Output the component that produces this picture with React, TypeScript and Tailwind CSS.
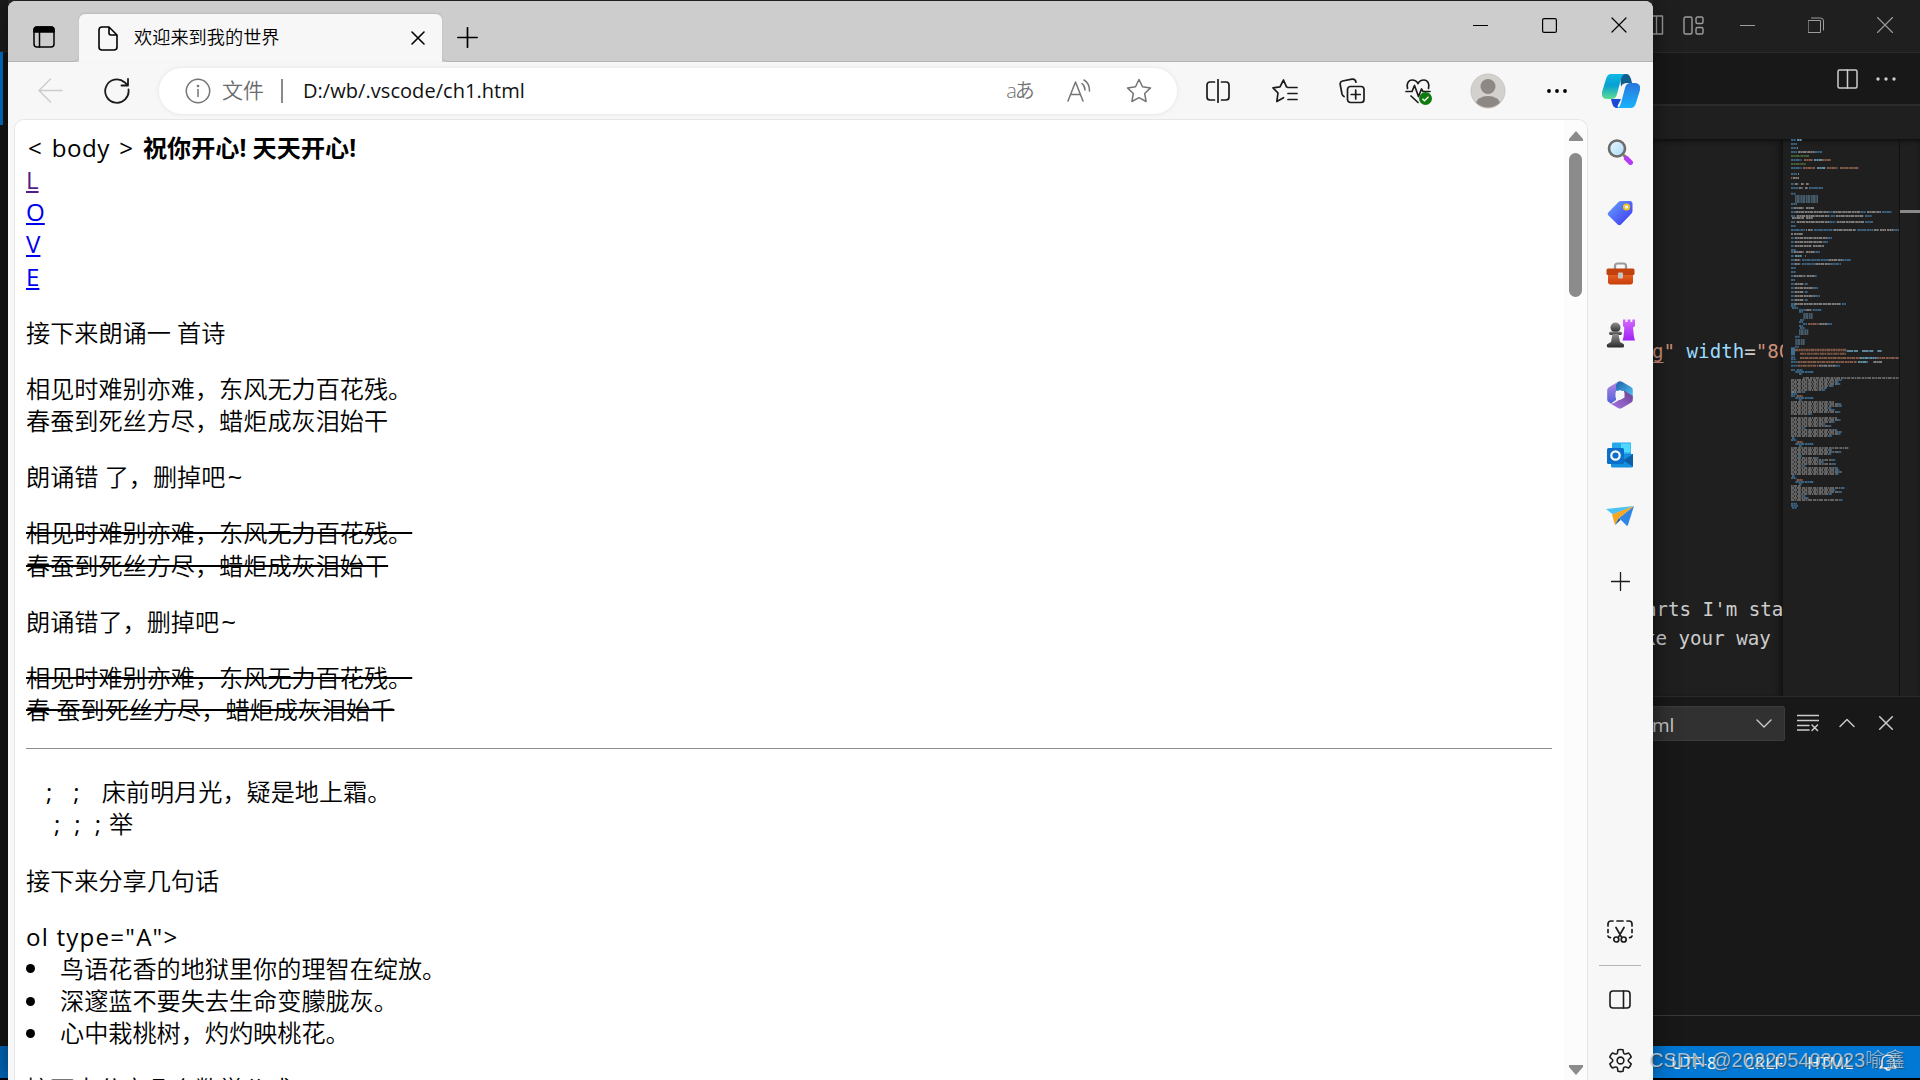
import React from 'react';

type IconProps = {
    w: number;
    h?: number;
    box: string;
    className?: string;
    sw?: number;
    children: React.ReactNode;
};

const Icon: React.FC<IconProps> = ({ w, h, box, className, sw = 1.5, children }) => (
    <svg width={w} height={h ?? w} viewBox={box} className={`shrink-0 ${className ?? ''}`} fill="none" stroke="currentColor" strokeWidth={sw} strokeLinecap="round" strokeLinejoin="round">
        {children}
    </svg>
);

const palette: Record<string, string> = {
    b: '#3f6d92',
    w: '#8c8c8c',
    o: '#94634f',
    g: '#4b6b3a',
    c: '#6c9fb8',
};

// y, x, width, colour
type Seg = [number, number, number, string];

const minimap: Seg[] = [
    [30, 33, 14, 'b'], [30, 51, 14, 'c'], [42, 33, 18, 'b'], [54, 33, 15, 'b'], [54, 50, 4, 'w'],
    [66, 33, 18, 'b'], [66, 54, 50, 'w'], [66, 104, 22, 'b'],
    [78, 33, 54, 'g'], [90, 33, 32, 'b'], [90, 72, 27, 'o'], [90, 102, 24, 'c'], [90, 126, 27, 'o'],
    [102, 33, 45, 'g'], [114, 33, 32, 'b'], [114, 69, 36, 'o'], [114, 111, 25, 'c'], [114, 141, 32, 'o'], [114, 180, 57, 'o'],
    [132, 33, 18, 'b'], [132, 54, 3, 'w'], [144, 33, 4, 'o'], [144, 39, 18, 'w'],
    [162, 33, 10, 'b'], [162, 45, 10, 'w'], [162, 63, 9, 'w'], [162, 78, 9, 'w'],
    [174, 33, 22, 'b'], [174, 57, 11, 'w'], [174, 75, 9, 'w'], [174, 87, 42, 'b'],
    [191, 33, 14, 'b'], [222, 33, 18, 'b'],
    [234, 33, 9, 'b'], [234, 42, 30, 'w'], [234, 78, 24, 'w'],
    [246, 33, 12, 'b'], [246, 46, 98, 'w'], [246, 144, 15, 'b'], [246, 159, 84, 'w'], [246, 243, 15, 'b'], [246, 261, 42, 'w'], [246, 306, 30, 'b'],
    [258, 33, 12, 'b'], [258, 50, 98, 'w'], [258, 152, 15, 'b'], [258, 168, 84, 'w'], [258, 255, 20, 'b'],
    [264, 36, 36, 'w'], [264, 78, 20, 'w'],
    [276, 33, 12, 'b'], [276, 50, 98, 'w'], [276, 148, 18, 'b'], [276, 170, 84, 'w'], [276, 255, 24, 'b'],
    [288, 33, 15, 'b'], [300, 33, 42, 'b'], [300, 78, 3, 'w'], [300, 84, 15, 'w'], [300, 102, 60, 'b'], [300, 162, 66, 'w'], [300, 232, 48, 'b'], [300, 282, 15, 'w'], [300, 300, 18, 'w'], [300, 321, 20, 'w'], [300, 343, 14, 'b'],
    [312, 33, 6, 'w'], [312, 42, 27, 'w'],
    [324, 33, 9, 'b'], [324, 44, 98, 'w'], [324, 142, 14, 'b'],
    [336, 33, 9, 'b'], [336, 44, 86, 'w'], [336, 130, 14, 'b'],
    [348, 33, 9, 'b'], [348, 44, 50, 'w'], [348, 99, 33, 'w'],
    [360, 33, 14, 'b'], [366, 33, 9, 'b'], [366, 42, 30, 'w'], [366, 78, 28, 'w'], [366, 106, 14, 'b'],
    [378, 45, 20, 'c'], [378, 33, 9, 'b'], [378, 75, 3, 'o'],
    [390, 33, 12, 'b'], [390, 45, 16, 'w'], [390, 66, 80, 'b'], [390, 146, 40, 'w'], [390, 186, 27, 'b'],
    [402, 33, 12, 'b'], [402, 45, 16, 'w'], [402, 66, 40, 'b'], [402, 106, 46, 'w'], [402, 152, 31, 'b'],
    [414, 33, 14, 'b'], [426, 33, 14, 'b'], [438, 33, 9, 'b'], [438, 42, 34, 'w'], [438, 80, 22, 'w'], [438, 102, 9, 'b'],
    [450, 33, 12, 'b'], [462, 33, 10, 'b'], [462, 44, 28, 'w'], [462, 74, 10, 'b'],
    [474, 33, 10, 'b'], [474, 44, 58, 'w'], [474, 102, 12, 'b'], [486, 33, 10, 'b'], [486, 44, 28, 'w'], [486, 74, 10, 'b'],
    [498, 33, 10, 'b'], [498, 44, 62, 'w'], [498, 106, 14, 'b'], [510, 33, 10, 'b'], [510, 44, 28, 'w'], [510, 74, 10, 'b'],
    [522, 33, 12, 'b'], [522, 44, 140, 'w'], [522, 186, 12, 'b'], [528, 33, 15, 'b'], [534, 36, 18, 'b'],
    [540, 57, 22, 'b'], [540, 79, 16, 'w'], [540, 98, 28, 'b'], [545, 57, 12, 'b'], [570, 60, 12, 'b'], [576, 57, 12, 'b'],
    [582, 69, 12, 'b'], [582, 84, 32, 'o'], [582, 118, 24, 'w'], [582, 142, 14, 'b'], [588, 57, 12, 'b'], [594, 60, 14, 'b'],
    [620, 45, 14, 'b'], [650, 45, 12, 'b'],
    [682, 33, 12, 'b'], [688, 33, 14, 'b'],
    [684, 60, 180, 'o'], [684, 240, 50, 'c'], [684, 290, 67, 'o'],
    [696, 33, 20, 'b'], [696, 54, 176, 'o'], [696, 234, 30, 'c'], [696, 280, 26, 'w'],
    [707, 33, 20, 'b'], [707, 54, 60, 'o'], [707, 116, 50, 'w'], [707, 166, 14, 'b'],
    [720, 33, 12, 'b'], [720, 50, 18, 'b'], [726, 46, 54, 'b'], [732, 57, 8, 'b'],
    [786, 36, 12, 'b'], [792, 33, 18, 'b'], [798, 33, 12, 'b'], [798, 50, 18, 'o'], [804, 46, 54, 'b'], [810, 57, 8, 'b'],
    [924, 36, 9, 'b'], [930, 33, 16, 'b'], [936, 50, 18, 'o'], [942, 46, 54, 'b'], [948, 57, 8, 'b'],
    [1038, 36, 9, 'b'], [1044, 33, 16, 'b'], [1050, 50, 18, 'o'], [1056, 46, 54, 'b'], [1062, 57, 8, 'b'],
    [1121, 33, 18, 'b'], [1127, 33, 21, 'b'], [1133, 36, 15, 'b'],
];

// lyric blocks: rows of plain text, [first y, widths...], 6 units apart
const blocks: number[][] = [
    [744, 324, 150, 140, 145, 125, 105, 100, 40],
    [816, 130, 148, 150, 118, 128, 145, 60],
    [864, 138, 146, 128, 100, 118, 40, 136, 150, 146, 120],
    [954, 172, 120, 148, 118, 30, 80, 130, 95, 132, 40, 138, 142, 150, 140],
    [1068, 30, 158, 130, 150, 120, 40, 50, 152],
];

const guides = [
    { x: 45, y: 195, w: 69, h: 24 },
    { x: 70, y: 549, w: 28, h: 18 },
    { x: 57, y: 598, w: 28, h: 17 },
    { x: 46, y: 627, w: 28, h: 18 },
];

const Minimap = () => (
    <svg width={116} height={557} viewBox="9 27 348 1671" className="shrink-0">
        {minimap.map(([y, x, w, c], i) => (
            <line key={i} x1={x} x2={x + w} y1={y} y2={y} stroke={palette[c]} strokeWidth={6} strokeDasharray="8 1 5 1 11 2" opacity={0.85} />
        ))}
        {blocks.map(([y, ...rows]) =>
            rows.map((w, i) => (
                <g key={`${y}-${i}`} opacity={0.85}>
                    <line x1={y === 744 && i === 0 ? 69 : 33} x2={33 + w} y1={y + i * 6} y2={y + i * 6} stroke={palette.w} strokeWidth={4.6} strokeDasharray={i % 2 ? '9 2 5 2 12 3' : '5 2 11 3 8 2'} />
                    {i > 0 && <line x1={33 + w - 8} x2={33 + w + 3} y1={y + i * 6} y2={y + i * 6} stroke={palette.b} strokeWidth={5} />}
                </g>
            ))
        )}
        {guides.map((g) => (
            <line key={g.y} x1={g.x} x2={g.x + g.w} y1={g.y + g.h / 2} y2={g.y + g.h / 2} stroke="#56758a" strokeWidth={g.h} strokeDasharray="5 1 8 2" opacity={0.7} />
        ))}
        <line x1={45} x2={200} y1={660} y2={660} stroke="#94634f" strokeWidth={8} strokeDasharray="9 1 5 1" opacity={0.8} />
        <line x1={33} x2={45} y1={664} y2={664} stroke="#3f6d92" strokeWidth={24} />
        <line x1={200} x2={305} y1={663} y2={663} stroke="#6c9fb8" strokeWidth={6} strokeDasharray="20 2 12 12" opacity={0.8} />
        <line x1={60} x2={200} y1={671} y2={671} stroke="#94634f" strokeWidth={6} strokeDasharray="12 1 5 2" opacity={0.8} />
    </svg>
);

const TabStrip = () => (
    <div className="flex h-[61px] shrink-0 bg-[#cdcdcd] rounded-t-lg">
        <div className="w-[71px] border-b border-[#b4b4b4] rounded-br-md flex items-center pl-[25px] pt-3">
            <Icon w={22} h={22} box="0 0 22 22" className="text-black">
                <rect x="1" y="1" width="20" height="20" rx="3" />
                <path d="M1 6V4a3 3 0 0 1 3-3h14a3 3 0 0 1 3 3v2z" fill="#000" />
                <path d="M6.5 6v15" />
            </Icon>
        </div>
        <div className="mt-[13px] w-[363px] bg-[#f7f7f7] rounded-t-md flex items-center pl-[19px] pr-[17px] shadow-[0_-1px_2px_#b9b9b9]">
            <Icon w={20} h={25} box="0 0 20 25" sw={1.6} className="text-black">
                <path d="M4 1h7l8 8v12a3 3 0 0 1-3 3H4a3 3 0 0 1-3-3V4a3 3 0 0 1 3-3zM11 1v6a2 2 0 0 0 2 2h6" />
            </Icon>
            <span className="ml-4 text-[18.2px] font-[350] grow text-black">欢迎来到我的世界</span>
            <Icon w={14} box="0 0 14 14" className="text-black" sw={1.6}><path d="M1 1l12 12M13 1L1 13" /></Icon>
        </div>
        <div className="grow border-b border-[#b4b4b4] rounded-bl-md flex pl-[15px] text-black">
            <Icon w={21} box="0 0 21 21" className="mt-[26px]" sw={1.7}><path d="M10.5 0.8v19.4M0.8 10.5h19.4" /></Icon>
            <div className="ml-auto mr-[26px] mt-4 h-4 flex items-center gap-[54px]">
                <Icon w={15} box="0 0 15 15" sw={1}><path d="M0 7.5h15" /></Icon>
                <Icon w={15} box="0 0 15 15" sw={1.2}><rect x=".6" y=".6" width="13.8" height="13.8" rx="1.5" /></Icon>
                <Icon w={16} box="0 0 16 16" sw={1.2}><path d="M1 1l14 14M15 1L1 15" /></Icon>
            </div>
        </div>
    </div>
);

const Copilot = () => (
    <svg width={38} height={34} viewBox="0 0 38 34" className="shrink-0">
        <defs>
            <linearGradient id="cpA" x1="0" y1="0" x2="0" y2="1"><stop offset="0" stopColor="#0fb8e6" /><stop offset=".45" stopColor="#06a0d2" /><stop offset="1" stopColor="#5fdc90" /></linearGradient>
            <linearGradient id="cpB" x1="0" y1="0" x2="0" y2="1"><stop offset="0" stopColor="#2a74dc" /><stop offset="1" stopColor="#18b4fb" /></linearGradient>
        </defs>
        <path d="M18 0h6c3 0 4 2 5 5l1 4h-5c-3 0-5 1-6 4z" fill="#0e5f8c" />
        <path d="M9 25h10l-3 6c-1 2 0 3 2 3h-2c-4 0-5-2-6-5z" fill="#1b48d4" />
        <path d="M9 0h15c-3 0-4 2-5 5l-4 15c-1 4-3 5-6 5H5c-4 0-6-3-5-7L4 5C5 1.500 6.500 0 9 0z" fill="url(#cpA)" />
        <path d="M29 34H14c3 0 4-2 5-5l4-15c1-4 3-5 6-5h4c4 0 6 3 5 7l-4 13c-1 3.500-2.500 5-5 5z" fill="url(#cpB)" />
    </svg>
);

const Toolbar = () => (
    <div className="h-[57px] shrink-0 flex items-center pl-[30px] pr-[13px] text-[#1b1b1b]">
        <Icon w={25} box="0 0 25 25" className="text-[#cccccc]"><path d="M24 12.500H1M12.500 1L1 12.500L12.500 24" /></Icon>
        <Icon w={26} box="0 0 26 26" sw={1.8} className="ml-[41px]"><path d="M24.500 11.500A11.700 11.700 0 1 1 20.500 4.200L24 7.500M24 1v6.500h-6.500" /></Icon>
        <div className="ml-[29px] w-[1018px] h-[46px] rounded-full bg-white shadow-[0_0_4px_#e2e2e2] flex items-center pl-[26px] pr-[25px] text-[#757575]">
            <Icon w={26} box="0 0 26 26" sw={1.5}><circle cx="13" cy="13" r="11.700" /><path d="M13 11.500v7" /><circle cx="13" cy="8" r=".6" fill="currentColor" /></Icon>
            <span className="ml-[11px] text-[21px] font-[350] text-[#6a6a6a]">文件</span>
            <span className="ml-[17px] w-0.5 h-6 bg-[#8a8a8a]" />
            <span className="ml-5 text-[20px] text-[#111111] grow tracking-[0.05px]">D:/wb/.vscode/ch1.html</span>
            <span className="text-[20px] font-[350] w-[27px] flex justify-center whitespace-nowrap tracking-[-2px]">aあ</span>
            <Icon w={24} box="0 0 24 24" className="ml-[34px]">
                <path d="M1 22L8.500 3L16 22M3.800 15.500h9.600M15 4.500c2 1.500 3 4 3 6.500M17 1c3.500 2 5.500 6 5.500 11" />
            </Icon>
            <Icon w={26} box="0 0 26 26" className="ml-[35px]"><path d="M13 1.500l3.500 7.300 8 1.100-5.800 5.600 1.400 8L13 19.700l-7.100 3.800 1.400-8L1.500 9.900l8-1.100z" /></Icon>
        </div>
        <Icon w={24} h={24} box="0 0 24 24" sw={1.7} className="ml-[29px]">
            <path d="M8.500 3H4a3 3 0 0 0-3 3v12a3 3 0 0 0 3 3h4.500M15.500 3H20a3 3 0 0 1 3 3v12a3 3 0 0 1-3 3h-4.500M12 0.500v23" />
        </Icon>
        <Icon w={26} box="0 0 26 26" sw={1.7} className="ml-[42px]">
            <path d="M15 8.800h-.5L11.500 2 8 8.800l-7 1 5 5.200-1.200 8.500 6.700-3.800M16 9.500h9M16 15.500h9M16 21.500h9" />
        </Icon>
        <Icon w={26} box="0 0 26 26" sw={1.700} className="ml-[41px]">
            <rect x="8.500" y="8.500" width="16.500" height="16" rx="3" /><path d="M16.700 12v9M12.200 16.500h9M5 18.500c-1-.5-1.500-1-2-2.500L1.200 6.500C.8 4.500 2 3.500 3.500 3L13 1.200c2-.4 3.500.8 4 3" />
        </Icon>
        <div className="relative ml-[40px] h-[26px] w-[26px]">
            <Icon w={26} box="0 0 26 26" sw={1.700}>
                <path d="M2.500 10.500C1 6 3.500 2 7 2c3 0 5 1.500 6 3.500C14 3.500 16 2 19 2c3.500 0 6 4 4.500 8.500M1 13.500h6l2.500-6 4 11 3-7.500 1.500 2.500h7M6 18l7 6.500" />
            </Icon>
            <svg width={13} height={13} viewBox="0 0 13 13" className="absolute left-[14px] top-[14px]">
                <circle cx="6.500" cy="6.500" r="6.500" fill="#0f7b0f" /><path d="M3.500 6.800l2 2 4-4" stroke="#fff" strokeWidth="1.400" fill="none" />
            </svg>
        </div>
        <svg width={36} height={36} viewBox="0 0 36 36" className="ml-[39px] shrink-0">
            <defs><clipPath id="av"><circle cx="18" cy="18" r="16.500" /></clipPath></defs>
            <circle cx="18" cy="18" r="17" fill="#d3d1cd" stroke="#c6c4c0" />
            <g clipPath="url(#av)" fill="#8d8884"><circle cx="18" cy="13.500" r="7.500" /><ellipse cx="18" cy="31" rx="12" ry="8" /></g>
        </svg>
        <svg width={20} height={4} viewBox="0 0 20 4" className="ml-[41px] shrink-0"><circle cx="2" cy="2" r="1.900" /><circle cx="10" cy="2" r="1.900" /><circle cx="18" cy="2" r="1.900" /></svg>
        <span className="grow" />
        <Copilot />
    </div>
);

const items = ['鸟语花香的地狱里你的理智在绽放。', '深邃蓝不要失去生命变朦胧灰。', '心中栽桃树，灼灼映桃花。'];

const Page = () => (
    <div className="grow bg-white pl-[11px] pt-[12px] pr-[12px] text-[24.15px] leading-[32.15px] text-black font-[350] overflow-hidden whitespace-nowrap">
        <div className="pl-0.5">
            <span className="font-normal tracking-[0.5px] [word-spacing:2.6px]">&lt; body &gt; </span>
            <b className="font-bold">祝你开心! 天天开心!</b>
        </div>
        <div><a className="underline text-[#551a8b] font-normal">L</a></div>
        <div><a className="underline text-[#0000ee] font-normal">O</a></div>
        <div><a className="underline text-[#0000ee] font-normal">V</a></div>
        <div><a className="underline text-[#0000ee] font-normal">E</a></div>
        <p className="mt-6">接下来朗诵一 首诗</p>
        <p className="mt-6">相见时难别亦难，东风无力百花残。<br />春蚕到死丝方尽，蜡炬成灰泪始干</p>
        <p className="mt-6">朗诵错 了，删掉吧<span className="ml-0.5 text-[26px] leading-none font-normal">~</span></p>
        <p className="mt-6 line-through decoration-2">相见时难别亦难，东风无力百花残。<br />春蚕到死丝方尽，蜡炬成灰泪始干</p>
        <p className="mt-6">朗诵错了，删掉吧<span className="ml-0.5 text-[26px] leading-none font-normal">~</span></p>
        <p className="mt-6 line-through decoration-2">相见时难别亦难，东风无力百花残。<br />春 蚕到死丝方尽，蜡炬成灰泪始千</p>
        <div className="mt-[22px] h-px bg-[#8f8f8f]" />
        <p className="mt-[27px]">
            <span className="ml-5 font-normal">;</span><span className="ml-[21px] font-normal">;</span><span className="ml-[22px]">床前明月光，疑是地上霜。</span>
            <br />
            <span className="ml-[28px] font-normal">;</span><span className="ml-[14px] font-normal">;</span><span className="ml-[14px] font-normal">;</span><span className="ml-[8px]">举</span>
        </p>
        <p className="mt-6">接下来分享几句话</p>
        <p className="mt-6 font-normal tracking-[1.2px]">ol type="A"&gt;</p>
        <ul>
            {items.map((item) => (
                <li key={item} className="flex items-center">
                    <span className="w-[9px] h-[9px] rounded-full bg-black mr-[25px]" />
                    {item}
                </li>
            ))}
        </ul>
        <p className="mt-6">接下来分享几个数学公式</p>
    </div>
);

const Scrollbar = () => (
    <div className="w-[23px] bg-[#fcfcfc] flex flex-col items-center pt-[11px] pb-[5px] shrink-0">
        <svg width={14} height={10} viewBox="0 0 14 10"><path d="M7 0L14 8v2H0V8z" fill="#8b8b8b" /></svg>
        <span className="mt-3 w-[13px] h-[144px] rounded-full bg-[#8b8b8b]" />
        <svg width={14} height={10} viewBox="0 0 14 10" className="mt-auto"><path d="M7 10L14 2V0H0V2z" fill="#8b8b8b" /></svg>
    </div>
);

const Cell: React.FC<{ children: React.ReactNode }> = ({ children }) => (
    <div className="h-[60.6px] flex items-center justify-center">{children}</div>
);

const Sidebar = () => (
    <div className="w-[65px] flex flex-col text-[#1b1b1b] pr-[1px] pt-[2px] shrink-0">
        <svg width={0} height={0} className="absolute">
            <defs>
                <linearGradient id="glass" x1="0" y1="0" x2="1" y2="1"><stop offset="0" stopColor="#eaf6fd" /><stop offset="1" stopColor="#a8dbf8" /></linearGradient>
                <linearGradient id="tag" x1="0" y1="0" x2="1" y2="1"><stop offset="0" stopColor="#6aa5ff" /><stop offset="1" stopColor="#3a30f0" /></linearGradient>
                <linearGradient id="box" x1="0" y1="0" x2="0" y2="1"><stop offset="0" stopColor="#ef6a28" /><stop offset="1" stopColor="#c73d0a" /></linearGradient>
                <linearGradient id="rook" x1="0" y1="0" x2="0" y2="1"><stop offset="0" stopColor="#d46bff" /><stop offset="1" stopColor="#a021f5" /></linearGradient>
                <linearGradient id="pawn" x1="0" y1="0" x2="0" y2="1"><stop offset="0" stopColor="#909090" /><stop offset="1" stopColor="#2b2b2b" /></linearGradient>
                <linearGradient id="m1" x1="0" y1="0" x2="0" y2="1"><stop offset="0" stopColor="#b685e6" /><stop offset="1" stopColor="#4f62d8" /></linearGradient>
                <linearGradient id="m2" x1="0" y1="0" x2="1" y2="1"><stop offset="0" stopColor="#1f5fa8" /><stop offset="1" stopColor="#53c8f8" /></linearGradient>
                <linearGradient id="m3" x1="0" y1="1" x2="1" y2="0"><stop offset="0" stopColor="#a778ea" /><stop offset="1" stopColor="#6a3d8c" /></linearGradient>
            </defs>
        </svg>
        <div className="h-[61.5px] flex items-center justify-center">
            <svg width={27} height={26} viewBox="0 0 27 26">
                <path d="M16.500 16l3.500 3.500" stroke="#777" strokeWidth="3" />
                <path d="M19.500 19.500l4 4" stroke="#b63bf7" strokeWidth="5" strokeLinecap="round" />
                <circle cx="10" cy="9.500" r="8" fill="url(#glass)" stroke="#6c6c6c" strokeWidth="2.600" />
            </svg>
        </div>
        <Cell>
            <svg width={26} height={26} viewBox="0 0 26 26">
                <path d="M14 1h9c1.500 0 2.500 1 2.500 2.500V11c0 1-.3 1.800-1 2.500L14 24.500c-1 1-2.300 1-3.300 0L1.500 15.500c-1-1-1-2.300 0-3.300L11.500 2c.7-.7 1.500-1 2.500-1z" fill="url(#tag)" />
                <circle cx="19.500" cy="7" r="2.700" fill="#e8eefc" stroke="#f2c40c" strokeWidth="1.800" />
            </svg>
        </Cell>
        <Cell>
            <svg width={29} height={23} viewBox="0 0 29 23">
                <path d="M9 7V4c0-1.500 1-2.500 2.500-2.500h6C19 1.500 20 2.500 20 4v3" fill="none" stroke="#999" strokeWidth="2.200" />
                <path d="M2 10h25v10c0 1.500-1 2.500-2.500 2.500h-20C3 22.500 2 21.500 2 20z" fill="url(#box)" />
                <rect x=".5" y="6.500" width="28" height="6.500" rx="1.500" fill="#c2420f" />
                <rect x="12" y="10.500" width="5" height="6" rx="1" fill="#c5c5c5" />
            </svg>
        </Cell>
        <Cell>
            <svg width={29} height={29} viewBox="0 0 29 29">
                <path d="M17 .5h2.500v2.500h2V.5h3v2.500h1.800V.5H29V7l-2 1.500L28 18l1 3.500H16.500l1-3.500.8-9.500L17 7z" fill="url(#rook)" />
                <g fill="url(#pawn)"><circle cx="9.500" cy="8.500" r="5" /><rect x="3" y="12.500" width="13" height="3.500" rx="1.700" /><path d="M6.500 15h6l1.500 8 3.500 2c.8.700.8 3.500-.5 3.500H2c-1.500 0-1.500-3-.5-3.500L5 23z" /></g>
            </svg>
        </Cell>
        <Cell>
            <svg width={26} height={28} viewBox="0 0 26 28">
                <path d="M11 .8c1.300-.9 2.700-.9 4 0l9 5.200c1.300.8 1.800 1.700 1.800 3.200V17L17 10l-8-.3V3z" fill="url(#m2)" />
                <path d="M11 .8L9 4v15L4 22.500 2 21.300C.6 20.500.2 19.500.2 18V9.500C.2 8 .8 7 2 6.200z" fill="url(#m1)" />
                <path d="M25.800 15v3.500c0 1.500-.5 2.500-1.800 3.200l-9 5.300c-1.300.7-2.700.7-4 0l-8.500-5c2 .8 3.500.5 5-.3L17 16V9.500z" fill="url(#m3)" />
                <path d="M13 9l4.500 2.500v5L13 19l-4.500-2.500v-5z" fill="#f7f7f7" />
            </svg>
        </Cell>
        <Cell>
            <svg width={26} height={26} viewBox="0 0 26 26">
                <rect x="5" y=".5" width="19" height="14" rx="1" fill="#28a8ea" /><rect x="14" y="1.500" width="9.500" height="9" fill="#50d9ff" />
                <path d="M4 12h22v12c0 1-.7 1.500-1.500 1.500h-19C4.700 25.500 4 25 4 24z" fill="#1490df" />
                <path d="M26 12L16 18.500l10 6z" fill="#0f5fa8" />
                <rect x="0" y="6" width="17" height="16" rx="1.500" fill="#0a6fc9" />
                <circle cx="8.500" cy="13.500" r="4.200" stroke="#fff" strokeWidth="2.200" fill="none" />
            </svg>
        </Cell>
        <Cell>
            <svg width={28} height={22} viewBox="0 0 28 22">
                <path d="M28 1L0 4l7 5.500z" fill="#4cc2f4" /><path d="M28 1L13 13l8 8c.4-.2.700-.6 1-1.200z" fill="#2f86e4" />
                <path d="M28 1L6 9.500 9 20l3.500-6.500z" fill="#f5a623" /><path d="M13 13l-4 7 5.500-5z" fill="#124f9c" />
            </svg>
        </Cell>
        <div className="h-[71px] flex items-center justify-center">
            <Icon w={19} box="0 0 19 19" sw={1.300}><path d="M9.500 .5v18M.5 9.500h18" /></Icon>
        </div>
        <div className="mt-auto flex flex-col items-center mb-[6px]">
            <Icon w={26} h={23} box="0 0 26 23" sw={1.700}>
                <path d="M1 6V4a3 3 0 0 1 3-3h2M10 1h6M20 1h2a3 3 0 0 1 3 3v2M1 9.500v3M25 9.500v3M1 16a2.500 2.500 0 0 0 2.500 1.700M25 16a2.500 2.500 0 0 1-2.500 1.700M9 7.500l5.800 10.200M17 7.500l-5.800 10.200" />
                <circle cx="9.300" cy="19.500" r="2.500" /><circle cx="16.700" cy="19.500" r="2.500" />
            </Icon>
            <span className="mt-[22px] w-[42px] h-px bg-[#b5b5b5]" />
            <Icon w={22} h={19} box="0 0 22 19" sw={1.600} className="mt-[24px]"><rect x="1" y="1" width="20" height="17" rx="3" /><path d="M14.500 1v17" /></Icon>
            <Icon w={27} box="0 0 24 24" sw={1.400} className="mt-[38px]">
                <path d="M12 1.200c.8 0 1.500.1 2.200.2l.5 2.700c.1.900 1 1.400 1.900 1.100l2.600-.9c1 1 1.800 2.300 2.300 3.700l-2.100 1.900c-.7.600-.7 1.600 0 2.200l2.100 1.900c-.5 1.400-1.300 2.700-2.300 3.700l-2.600-.9c-.9-.3-1.800.2-1.900 1.100l-.5 2.700c-1.400.4-3 .4-4.400 0l-.5-2.700c-.1-.9-1-1.400-1.900-1.100l-2.600.9C3.800 16.700 3 15.400 2.500 14l2.100-1.900c.7-.6.700-1.600 0-2.200L2.500 8C3 6.600 3.800 5.300 4.800 4.300l2.600.9c.9.300 1.800-.2 1.900-1.100l.5-2.700c.7-.1 1.400-.2 2.200-.2z" transform="translate(0 1)" />
                <circle cx="12" cy="12" r="3" />
            </Icon>
        </div>
    </div>
);

const Browser = () => (
    <div className="w-[1645px] mt-px h-[1079px] bg-[#f7f7f7] rounded-t-lg flex flex-col shrink-0 z-10 shadow-[0_0_24px_rgba(0,0,0,0.5)]">
        <TabStrip />
        <Toolbar />
        <div className="flex grow basis-0 min-h-0 pl-[6px]">
            <div className="flex grow min-w-0 overflow-hidden border border-b-0 border-[#e6e6e6] rounded-t-[10px]">
                <Page />
                <Scrollbar />
            </div>
            <Sidebar />
        </div>
    </div>
);

const Editor = () => (
    <div className="w-[267px] h-full flex flex-col bg-[#181818] text-[#cccccc] shrink-0 overflow-hidden">
        <div className="h-[53px] bg-[#1f1f1f] border-b border-[#2b2b2b] flex items-center pb-[2px] text-[#9d9d9d]">
            <Icon w={11} h={20} box="0 0 11 20" sw={1.400}><path d="M0 1h9.500v18H0M3.500 1v18" /></Icon>
            <Icon w={21} h={19} box="0 0 21 19" sw={1.400} className="ml-[19px]"><rect x="1" y="1" width="8" height="17" rx="1.500" /><rect x="13" y="1" width="7" height="6.500" rx="1.500" /><rect x="13" y="11.500" width="7" height="6.500" rx="1.500" /></Icon>
            <Icon w={15} box="0 0 15 15" sw={1} className="ml-[36px]"><path d="M0 7.500h15" /></Icon>
            <Icon w={16} box="0 0 16 16" sw={1} className="ml-[53px]"><path d="M.5 3.500h12v12H.5zM3.500 1h9a3 3 0 0 1 3 3v9" /></Icon>
            <Icon w={16} box="0 0 16 16" sw={1.100} className="ml-[53px]"><path d="M.5 .5l15 15M15.500 .5l-15 15" /></Icon>
        </div>
        <div className="h-[53px] border-b-2 border-[#2b2b2b] flex items-center pl-[184px]">
            <Icon w={21} h={20} box="0 0 21 20"><rect x="1" y="1" width="19" height="18" rx="1.500" /><path d="M10.500 1v18" /></Icon>
            <svg width={20} height={4} viewBox="0 0 20 4" className="ml-[18px]" fill="#ccc"><circle cx="2" cy="2" r="1.700" /><circle cx="10" cy="2" r="1.700" /><circle cx="18" cy="2" r="1.700" /></svg>
        </div>
        <div className="h-[33px] bg-[#1f1f1f]" />
        <div className="h-[557px] bg-[#1f1f1f] flex shadow-[inset_0_3px_4px_-1px_#101010]">
            <div className="w-[130px] overflow-hidden whitespace-pre font-['DejaVu_Sans_Mono',monospace] text-[19.15px] leading-[29px] pt-[198px] shadow-[inset_-7px_0_6px_-4px_#101010]">
                <div className="-ml-px">
                    <span className="text-[#ce9178] underline underline-offset-4">g</span>
                    <span className="text-[#ce9178]">" </span>
                    <span className="text-[#9cdcfe]">width</span>=<span className="text-[#ce9178]">"80</span>
                </div>
                <div className="mt-[229px] -ml-2">arts I'm sta</div>
                <div className="-ml-[9px]">ke your way</div>
            </div>
            <Minimap />
            <div className="grow border-l border-[#101010] border-t pt-[70px]">
                <div className="h-[3px] bg-[#8a8a8a]" />
            </div>
        </div>
        <div className="h-[320px] border-t border-[#2b2b2b] border-b border-b-[#3a3a3a] flex items-start pt-[9px]">
            <div className="w-[132px] h-[35px] bg-[#313131] border border-l-0 border-[#3c3c3c] rounded-r-[3px] flex items-center justify-between pr-3 text-[19px]">
                <span className="-ml-px mt-1">ml</span>
                <Icon w={16} h={10} box="0 0 16 10" sw={1.400}><path d="M1 1l7 7 7-7" /></Icon>
            </div>
            <Icon w={22} h={18} box="0 0 22 18" sw={1.500} className="ml-3 mt-[8px]"><path d="M0 1.500h22M0 6.500h22M0 11.500h12M0 16h12M15 11l5.500 5.500M20.500 11L15 16.500" /></Icon>
            <Icon w={16} h={10} box="0 0 16 10" sw={1.400} className="ml-[20px] mt-3"><path d="M1 8.500l7-7 7 7" /></Icon>
            <Icon w={14} box="0 0 14 14" sw={1.500} className="ml-[24px] mt-[10px]"><path d="M.7 .7l12.600 12.600M13.300 .7L.7 13.300" /></Icon>
        </div>
        <div className="h-[30px]" />
        <div className="h-8 bg-[#0078d4] flex items-center text-white text-[17px] pt-0.5">
            <span className="ml-[18px] w-[73px]">UTF-8</span>
            <span className="w-[63px]">CRLF</span>
            <span className="w-[72px]">HTML</span>
            <Icon w={18} h={20} box="0 0 18 20" sw={1.500}><path d="M1 15h16l-2-3V8A6 6 0 0 0 3 8v4zM7 15a2 2 0 0 0 4 0" /></Icon>
        </div>
        <div className="h-0.5 bg-black" />
    </div>
);

const App = () => (
    <div className="relative w-[1920px] h-[1080px] overflow-hidden flex bg-[#2a2728] font-['Open_Sans','Noto_Sans_CJK_SC',sans-serif]">
        <div className="w-2 flex flex-col shrink-0 bg-[#141414]">
            <div className="h-[52px] bg-[#1c1c1c] border-b border-[#2b2b2b]" />
            <div className="h-[73px] w-[3px] bg-[#0070c8]" />
            <div className="grow" />
            <div className="h-8 bg-[#0067b8]" />
            <div className="h-0.5 bg-black" />
        </div>
        <Browser />
        <Editor />
        <span className="absolute z-20 left-[1649px] top-[1045px] whitespace-nowrap font-['Liberation_Sans','Noto_Sans_CJK_SC',sans-serif] text-[20px] leading-[30px] font-light text-[#d2dde8]/75 [text-shadow:1px_1px_1px_rgba(60,60,60,0.7)]">CSDN @202205403023喻鑫</span>
    </div>
);

export default App;
